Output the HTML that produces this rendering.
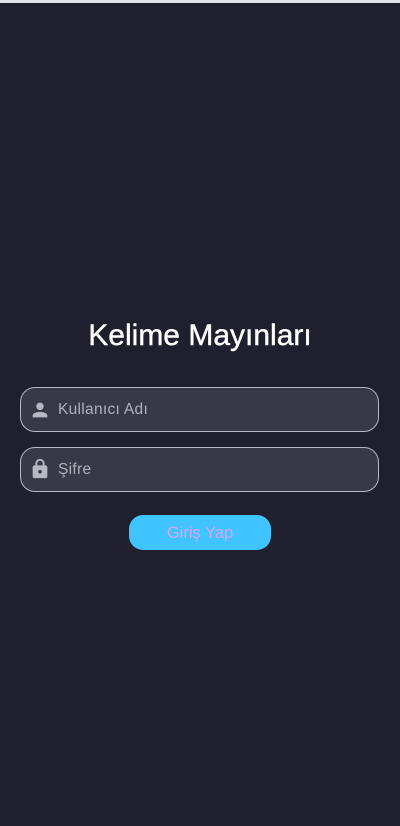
<!DOCTYPE html>
<html><head><meta charset="utf-8"><style>
html,body{margin:0;padding:0}
body{width:400px;height:826px;background:#1f1f2e;position:relative;overflow:hidden;font-family:"Liberation Sans",sans-serif}
.top{position:absolute;left:0;top:0;width:400px;height:3px;background:#e4e4ea}
h1{position:absolute;top:316px;left:0;width:400px;text-align:center;margin:0;color:#fff;font-weight:normal;font-size:30px;line-height:40px;-webkit-text-stroke:0.4px #fff}
.f{position:absolute;left:20px;width:357px;height:43px;border:1px solid #b8b8c4;border-radius:15px;background:#383847;color:#b0b0ba;font-size:15.5px;letter-spacing:0.3px}
.f span{position:absolute;left:37px;top:13px}
.f svg{position:absolute;left:8px;top:11px}
.btn{position:absolute;left:129px;top:515px;width:142px;height:35px;border-radius:14px;background:#40c4ff;color:#d9a7f0;font-size:16.5px;text-align:center;line-height:36px}
</style></head><body>
<div class="top"></div>
<h1>Kelime Mayınları</h1>
<div class="f" style="top:387px"><svg width="22" height="22" viewBox="0 0 24 24"><path fill="#b8b8c2" d="M12 12c2.2 0 4-1.8 4-4s-1.8-4-4-4-4 1.8-4 4 1.8 4 4 4zm0 2c-2.7 0-8 1.3-8 4v2h16v-2c0-2.7-5.3-4-8-4z"/></svg><span>Kullanıcı Adı</span></div>
<div class="f" style="top:447px"><svg width="22" height="24" viewBox="0 0 24 24" style="top:9px"><path fill="#b8b8c2" d="M18 8h-1V6c0-2.8-2.2-5-5-5S7 3.2 7 6v2H6c-1.1 0-2 .9-2 2v10c0 1.1.9 2 2 2h12c1.1 0 2-.9 2-2V10c0-1.1-.9-2-2-2zm-6 9c-1.1 0-2-.9-2-2s.9-2 2-2 2 .9 2 2-.9 2-2 2zM9 8V6c0-1.7 1.3-3 3-3s3 1.3 3 3v2H9z"/></svg><span>Şifre</span></div>
<div class="btn">Giriş Yap</div>
</body></html>
